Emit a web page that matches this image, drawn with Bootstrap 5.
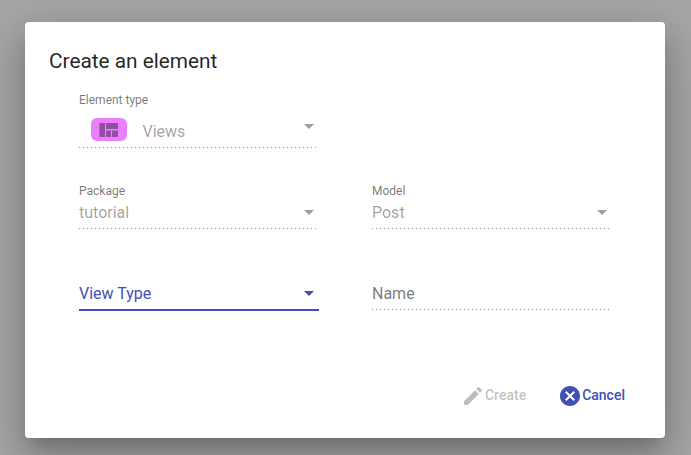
<!DOCTYPE html>
<html lang="en">
<head>
<meta charset="utf-8">
<title>Create an element</title>
<link href="https://cdn.jsdelivr.net/npm/bootstrap@5.3.0/dist/css/bootstrap.min.css" rel="stylesheet">
<style>
body{font-family:Roboto,sans-serif;background:#a6a6a6;height:455px;overflow:hidden;padding:22px 26px 0 25px}
.dialog{height:416px;border:0;border-radius:4px;padding:23px 24px 30px;box-shadow:0 11px 15px -7px rgba(0,0,0,.2),0 24px 38px 3px rgba(0,0,0,.14),0 9px 46px 8px rgba(0,0,0,.12)}
.title{font-size:20.8px;line-height:32px;font-weight:400;color:rgba(0,0,0,.87);margin:0;height:47px}
.fields{padding-left:30px;display:grid;grid-template:91px 95px 33px / 240px 240px;column-gap:53px}
.field{color:rgba(0,0,0,.38);font-size:16px;line-height:20px}
.caption{font-size:12px;line-height:14px;color:rgba(0,0,0,.54);display:block;padding-top:1px;margin-bottom:-1px}
.value{height:31px}
.type-value{margin-top:10px}
.type-value .caret,.type-value .chip{position:relative;top:-2px}
.type-value .caret{top:-5px}
.dots{height:1px;width:238px;background:repeating-linear-gradient(90deg,rgba(0,0,0,.45) 0 1px,transparent 1px 4px)}
.caret{border:5px solid transparent;border-top-color:currentColor;border-bottom:0;margin-right:5px}
.chip{width:36px;height:23px;border-radius:6px;background:#ea80fc;margin:0 15.5px 0 12px}
.active-field{color:#3f51b5}
.active-field .dots{height:2px;width:240px;background:#3f51b5}
.name-field{color:rgba(0,0,0,.54)}
.action{font-size:14px;font-weight:500;line-height:22px;color:#3f51b5;background:none;border:0;padding:0}
.action:disabled{color:rgba(0,0,0,.26)}
.action span{margin-top:-2px}
.actions{gap:32px;padding-right:16px}
</style>
<script src="https://cdn.jsdelivr.net/npm/bootstrap@5.3.0/dist/js/bootstrap.bundle.min.js"></script>
</head>
<body>
<main class="card dialog" role="dialog" aria-labelledby="heading">
<h1 class="title" id="heading">Create an element</h1>
<form class="fields">
<div class="field"><span class="caption">Element type</span>
<div class="value type-value d-flex align-items-center"><span class="chip d-flex align-items-center justify-content-center"><svg width="36" height="23" viewBox="0 0 36 23" fill="#934ea3"><path d="M8.4 5H14v14H8.4zM15 5h12v6H15zM15 12.5h5V19h-5zM21 12.5h6V19h-6z"/></svg></span>Views<i class="caret ms-auto"></i></div><div class="dots"></div></div>
<div></div>
<div class="field"><span class="caption">Package</span><div class="value d-flex align-items-center">tutorial<i class="caret ms-auto"></i></div><div class="dots"></div></div>
<div class="field"><span class="caption">Model</span><div class="value d-flex align-items-center">Post<i class="caret ms-auto"></i></div><div class="dots"></div></div>
<div class="field active-field"><div class="value d-flex align-items-center">View Type<i class="caret ms-auto"></i></div><div class="dots"></div></div>
<div class="field name-field"><div class="value d-flex align-items-center">Name</div><div class="dots"></div></div>
</form>
<div class="actions d-flex justify-content-end mt-auto">
<button class="action d-flex align-items-center" type="button" disabled><svg width="24" height="24" viewBox="0 0 24 24" fill="currentColor"><path d="M3 17.25V21h3.75L17.81 9.94l-3.75-3.75L3 17.25zM20.71 7.04a1 1 0 0 0 0-1.41l-2.34-2.34a1 1 0 0 0-1.41 0l-1.83 1.83 3.75 3.75 1.83-1.83z"/></svg><span>Create</span></button>
<button class="action d-flex align-items-center" type="button"><svg width="24" height="24" viewBox="0 0 24 24" fill="currentColor"><path d="M12 2C6.47 2 2 6.47 2 12s4.47 10 10 10 10-4.47 10-10S17.53 2 12 2zm5 13.59L15.59 17 12 13.41 8.41 17 7 15.59 10.59 12 7 8.41 8.41 7 12 10.59 15.59 7 17 8.41 13.41 12 17 15.59z"/></svg><span>Cancel</span></button>
</div>
</main>
</body>
</html>
